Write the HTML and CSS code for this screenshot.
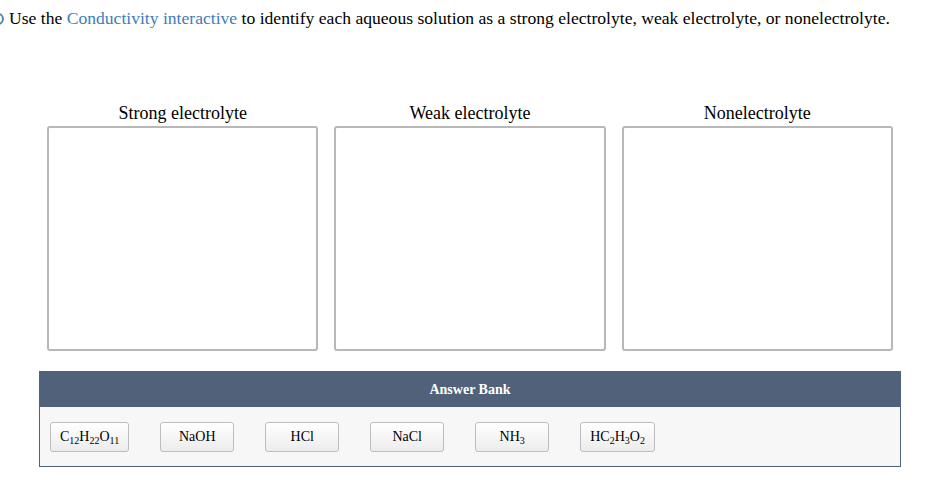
FILE: index.html
```html
<!DOCTYPE html>
<html>
<head>
<meta charset="utf-8">
<link rel="stylesheet" href="styles.css">
</head>
<body>
<div class="question">
  <span class="marker"></span>
  <p class="prompt">Use the <a class="link" href="#">Conductivity interactive</a> to identify each aqueous solution as a strong electrolyte, weak electrolyte, or nonelectrolyte.</p>
</div>

<div class="bins">
  <div class="bin">
    <div class="bin-title">Strong electrolyte</div>
    <div class="bin-drop"></div>
  </div>
  <div class="bin">
    <div class="bin-title">Weak electrolyte</div>
    <div class="bin-drop"></div>
  </div>
  <div class="bin">
    <div class="bin-title">Nonelectrolyte</div>
    <div class="bin-drop"></div>
  </div>
</div>

<div class="bank">
  <div class="bank-head">Answer Bank</div>
  <div class="bank-body">
    <div class="chip">C<sub>12</sub>H<sub>22</sub>O<sub>11</sub></div>
    <div class="chip">NaOH</div>
    <div class="chip">HCl</div>
    <div class="chip">NaCl</div>
    <div class="chip">NH<sub>3</sub></div>
    <div class="chip">HC<sub>2</sub>H<sub>3</sub>O<sub>2</sub></div>
  </div>
</div>
</body>
</html>
```

FILE: styles.css
```css
html, body {
  margin: 0;
  padding: 0;
  background: #fff;
}

body {
  width: 928px;
  height: 482px;
  overflow: hidden;
  font-family: "Liberation Serif", "Times New Roman", serif;
  color: #000;
}

.question {
  position: relative;
  padding: 7px 0 0 9px;
}

/* status ring peeking in from the left edge */
.marker {
  position: absolute;
  left: -8px;
  top: 13px;
  width: 8px;
  height: 8px;
  border: 2px solid #5b86b0;
  border-radius: 50%;
}

.prompt {
  margin: 0;
  font-size: 17.6px;
  line-height: 22px;
  white-space: nowrap;
}

.link {
  color: #3d7cb9;
  text-decoration: none;
}

.bins {
  display: flex;
  gap: 16px;
  margin: 73px 0 0 47px;
  width: 846px;
}

.bin {
  flex: 1;
  display: flex;
  flex-direction: column;
  align-items: stretch;
}

.bin-title {
  text-align: center;
  font-size: 18px;
  line-height: 22px;
  height: 24px;
}

.bin-drop {
  height: 221px;
  border: 2px solid #b8b8b8;
  border-radius: 3px;
  background: #fff;
}

.bank {
  margin: 20px 0 0 39px;
  width: 860px;
  border: 1px solid #4f6278;
}

.bank-head {
  background: #506279;
  color: #fff;
  font-weight: bold;
  font-size: 14px;
  text-align: center;
  height: 35px;
  line-height: 35px;
}

.bank-body {
  background: #f7f7f7;
  display: flex;
  gap: 31px;
  padding: 15px 10px 14px 10px;
}

.chip {
  box-sizing: border-box;
  min-width: 74px;
  height: 30px;
  padding: 0 9px;
  border: 1px solid #bdbdbd;
  border-radius: 3px;
  background: linear-gradient(#ffffff, #ececec);
  font-size: 14px;
  line-height: 28px;
  text-align: center;
  white-space: nowrap;
}

.chip sub {
  font-size: 10px;
  line-height: 0;
  vertical-align: -3px;
}
```
